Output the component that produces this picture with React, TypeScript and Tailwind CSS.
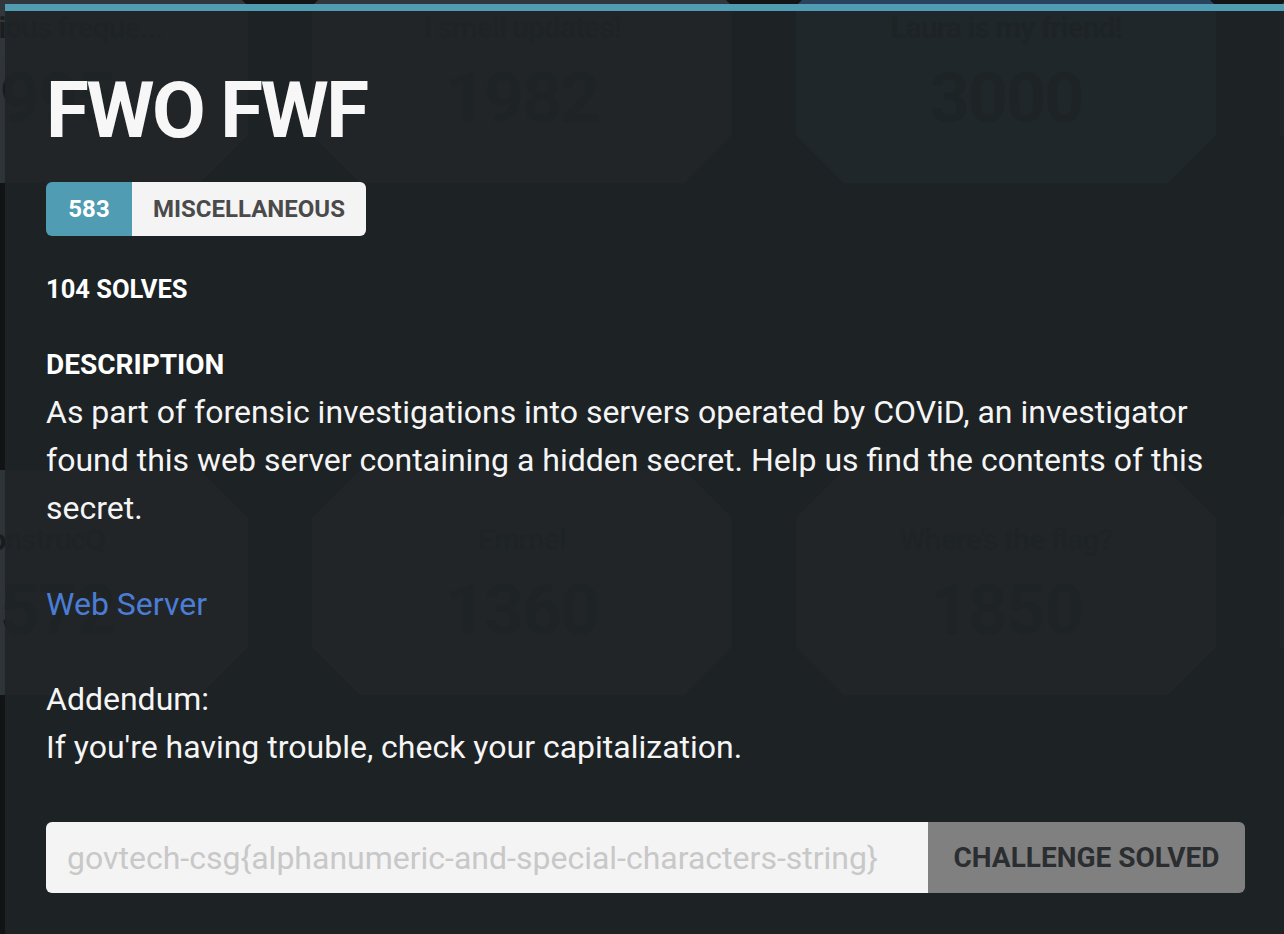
import React from 'react';

const cards = [
  { title: 'Suspicious freque...', points: '1995', blue: false },
  { title: 'I smell updates!', points: '1982', blue: false },
  { title: 'Laura is my friend!', points: '3000', blue: true },
  { title: 'Hold the line!', points: '2000', blue: false },
  { title: 'ConstrucQ', points: '1572', blue: false },
  { title: 'Emmel', points: '1360', blue: false },
  { title: "Where's the flag?", points: '1850', blue: false },
  { title: 'Sounds fishy', points: '2000', blue: false },
];

const heading = { fontFamily: 'Roboto, "Liberation Sans", sans-serif' };
const body = { fontFamily: 'Roboto, "Liberation Sans", sans-serif' };

function Card({ title, points, blue }: { title: string; points: string; blue: boolean }) {
  return (
    <div
      className={`flex h-[225px] flex-col items-center pt-[46px] ${blue ? 'bg-[#2a4560]' : 'bg-[#32383d]'} [clip-path:polygon(48px_0,372px_0,420px_48px,420px_177px,372px_225px,48px_225px,0_177px,0_48px)]`}
    >
      <div className="text-[30px] leading-[48px] font-bold tracking-[-1px] text-[#1c1f22]" style={heading}>
        {title}
      </div>
      <div className="mt-[10px] text-[70px] leading-[72px] font-bold tracking-[-2px] text-[#1c1f22]" style={heading}>
        {points}
      </div>
    </div>
  );
}

export default function App() {
  return (
    <div className="relative h-[934px] w-full overflow-hidden bg-[#131517]">
      {/* challenge board behind the modal */}
      <div className="-mt-[42px] -ml-[172px] grid w-max grid-cols-[420px_420px_420px_420px] gap-x-16 gap-y-[287px]">
        {cards.map((c) => (
          <Card key={c.title} {...c} />
        ))}
      </div>

      {/* modal */}
      <div className="absolute top-[4px] right-0 bottom-0 left-[5px] border-t-[7px] border-[#4f9cb3] bg-[#1f2326]/90 shadow-2xl">
        <div className="flex w-[1240px] flex-col pt-[61px] pl-[41px] text-white">
          <h1 className="text-[78px] leading-none font-bold tracking-[-2.5px] text-[#f7f7f7]" style={heading}>
            FWO FWF
          </h1>

          <div className="mt-[32px] flex h-[54px] w-max overflow-hidden rounded-[6px] text-[24px] font-bold" style={heading}>
            <span className="flex w-[86px] items-center justify-center bg-[#4f9cb3] text-white">583</span>
            <span className="flex items-center bg-[#f4f4f4] px-[21px] text-[#4a4a4a]">MISCELLANEOUS</span>
          </div>

          <div className="mt-[37px] text-[25.5px] leading-[32px] font-bold" style={heading}>
            104 SOLVES
          </div>

          <div className="mt-[42px] text-[28px] leading-[36px] font-bold" style={heading}>
            DESCRIPTION
          </div>

          <div className="mt-[5px] text-[32px] leading-[48px] text-[#f5f5f5]" style={body}>
            <p>
              As part of forensic investigations into servers operated by COViD, an investigator found this web server
              containing a hidden secret. Help us find the contents of this secret.
            </p>
            <p className="mt-[48px]">
              <a href="#" className="text-[#4b7dd4]">
                Web Server
              </a>
            </p>
            <p className="mt-[47px]">Addendum:</p>
            <p>If you're having trouble, check your capitalization.</p>
          </div>

          <div className="mt-[51px] flex h-[71px] overflow-hidden rounded-[6px]">
            <input
              className="min-w-0 flex-1 bg-[#f4f4f4] px-[21px] text-[32px] text-[#333] outline-none placeholder:text-[#c8c8c8]"
              style={body}
              placeholder="govtech-csg{alphanumeric-and-special-characters-string}"
            />
            <button className="w-[317px] bg-[#808080] text-[28px] font-bold text-[#2b2e31]" style={heading}>
              CHALLENGE SOLVED
            </button>
          </div>
        </div>
      </div>
    </div>
  );
}
